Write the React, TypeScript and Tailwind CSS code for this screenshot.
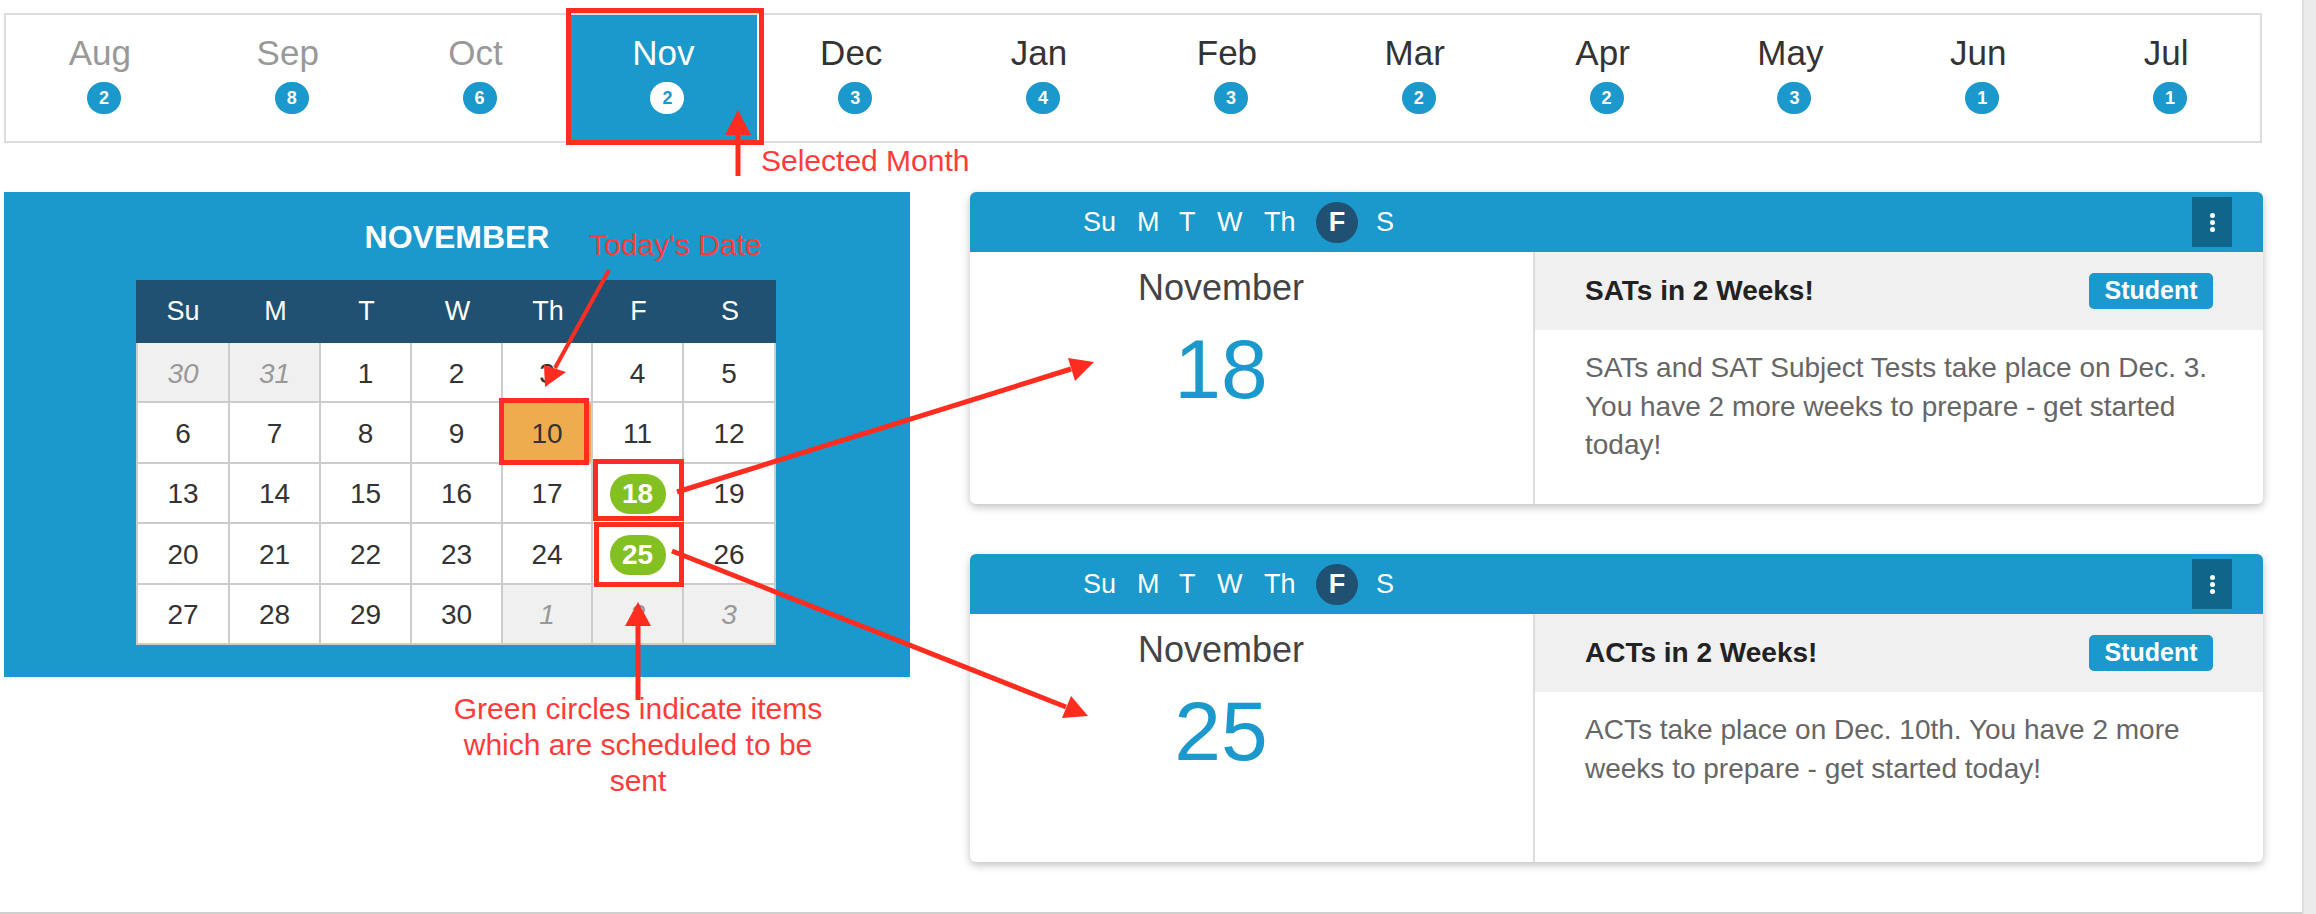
import React from 'react'

const BLUE = 'bg-[#1b98cc]'

const months = [
  { name: 'Aug', count: 2, past: true },
  { name: 'Sep', count: 8, past: true },
  { name: 'Oct', count: 6, past: true },
  { name: 'Nov', count: 2, selected: true },
  { name: 'Dec', count: 3 },
  { name: 'Jan', count: 4 },
  { name: 'Feb', count: 3 },
  { name: 'Mar', count: 2 },
  { name: 'Apr', count: 2 },
  { name: 'May', count: 3 },
  { name: 'Jun', count: 1 },
  { name: 'Jul', count: 1 },
]

const weekHeader = ['Su', 'M', 'T', 'W', 'Th', 'F', 'S']

const days: { label: number; muted?: boolean }[] = [
  { label: 30, muted: true },
  { label: 31, muted: true },
  ...Array.from({ length: 30 }, (_, i) => ({ label: i + 1 })),
  { label: 1, muted: true },
  { label: 2, muted: true },
  { label: 3, muted: true },
]

function MonthTab({ name, count, past, selected }: { name: string; count: number; past?: boolean; selected?: boolean }) {
  return (
    <div className={`flex flex-col items-center pt-[14px] ${selected ? BLUE : ''}`}>
      <div className={`text-[35px] leading-[48px] ${selected ? 'text-white' : past ? 'text-[#999999]' : 'text-[#333333]'}`}>
        {name}
      </div>
      <div
        className={`mt-[5px] ml-[8px] flex h-[32px] w-[34px] items-center justify-center rounded-full text-[18px] font-bold ${
          selected ? 'bg-white text-[#1b98cc]' : 'bg-[#1b98cc] text-white'
        }`}
      >
        {count}
      </div>
    </div>
  )
}

function DayCell({ label, muted, index }: { label: number; muted?: boolean; index: number }) {
  const scheduled = !muted && (label === 18 || label === 25)
  const today = !muted && label === 10
  return (
    <div
      className={`flex h-[60.4px] items-center justify-center border-r-2 border-b-2 border-[#cccccc] pt-[3px] text-[28px] ${
        index % 7 === 0 ? 'border-l-2' : ''
      } ${muted ? 'bg-[#f0f0f0] italic text-[#999999]' : today ? 'bg-[#eeac4f] text-[#333333]' : 'bg-white text-[#333333]'}`}
    >
      {scheduled ? (
        <span className="flex h-[40px] w-[56px] items-center justify-center rounded-full bg-[#83c022] font-bold text-white">
          {label}
        </span>
      ) : (
        label
      )}
    </div>
  )
}

function Calendar() {
  return (
    <div className={`h-[485px] w-[906px] pt-[27px] ${BLUE}`}>
      <div className="text-center text-[32px] leading-[36px] font-bold text-white">NOVEMBER</div>
      <div className="mt-[25px] ml-[132px] w-[640px]">
        <div className="grid h-[63px] grid-cols-[94px_91px_91px_91px_90px_91px_92px] items-center bg-[#215172] text-center text-[27px] text-white">
          {weekHeader.map((d) => (
            <div key={d}>{d}</div>
          ))}
        </div>
        <div className="grid grid-cols-[94px_91px_91px_91px_90px_91px_92px]">
          {days.map((d, i) => (
            <DayCell key={i} index={i} label={d.label} muted={d.muted} />
          ))}
        </div>
      </div>
    </div>
  )
}

function MessageCard({ day, title, body, tall }: { day: number; title: string; body: string; tall?: boolean }) {
  return (
    <div className={`flex flex-col overflow-hidden rounded-[6px] bg-white shadow-[0_3px_8px_rgba(0,0,0,0.25)] ${tall ? 'h-[312px]' : 'h-[308px]'}`}>
      <div className={`flex h-[60px] shrink-0 items-center pr-[31px] pl-[113px] ${BLUE}`}>
        <div className="flex items-center text-[27px] text-white">
          <span className="w-[54px]">Su</span>
          <span className="w-[42px]">M</span>
          <span className="w-[38px]">T</span>
          <span className="w-[47px]">W</span>
          <span className="w-[52px]">Th</span>
          <span className="mr-[18px] flex h-[41px] w-[42px] items-center justify-center rounded-full bg-[#215172] font-bold">
            F
          </span>
          <span>S</span>
        </div>
        <div className="ml-auto flex h-[50px] w-[40px] flex-col items-center justify-center gap-[2px] bg-[#10668a]">
          <span className="h-[5px] w-[5px] rounded-full bg-white" />
          <span className="h-[5px] w-[5px] rounded-full bg-white" />
          <span className="h-[5px] w-[5px] rounded-full bg-white" />
        </div>
      </div>
      <div className="flex min-h-0 flex-1">
        <div className="w-[565px] shrink-0 border-r-2 border-[#dddddd] pr-[61px] text-center">
          <div className="mt-[14px] text-[36px] leading-[44px] text-[#444444]">November</div>
          <div className="mt-[11px] text-[84px] leading-[96px] text-[#1b98cc]">{day}</div>
        </div>
        <div className="flex-1">
          <div className="flex h-[78px] items-center justify-between bg-[#f0f0f0] pr-[50px] pl-[50px]">
            <div className="text-[28px] font-bold text-[#222222]">{title}</div>
            <div className={`flex h-[36px] w-[124px] items-center justify-center rounded-[5px] text-[25px] font-bold text-white ${BLUE}`}>
              Student
            </div>
          </div>
          <p className="mt-[19px] px-[50px] text-[28px] leading-[38.5px] text-[#666666]">{body}</p>
        </div>
      </div>
    </div>
  )
}

// red markup drawn on top of the screenshot
function Annotations() {
  const red = '#ff2d20'
  return (
    <>
      <svg className="absolute top-0 left-0" width="2316" height="914" viewBox="0 0 2316 914" fill="none">
        <g stroke={red} strokeWidth="5">
          <rect x="568.5" y="10.5" width="193" height="132" />
          <rect x="501.5" y="400.5" width="85" height="62" />
          <rect x="595.5" y="461.5" width="86" height="57" />
          <rect x="596.5" y="524.5" width="85" height="60" />
          <line x1="738" y1="176" x2="738" y2="130" />
          <line x1="609" y1="270" x2="555" y2="368" strokeWidth="4" />
          <line x1="677" y1="492" x2="1071" y2="369" />
          <line x1="672" y1="551" x2="1066" y2="707" />
          <line x1="638" y1="700" x2="638" y2="620" />
        </g>
        <g fill={red}>
          <polygon points="738,110 725,135 751,135" />
          <polygon points="545,387 544,365 566,372" />
          <polygon points="1094,362 1068,358 1075,381" />
          <polygon points="1088,716 1071,696 1062,718" />
          <polygon points="638,602 625,626 651,626" />
        </g>
      </svg>
      <div className="absolute top-[141px] left-[761px] text-[30px] leading-[40px] text-[#ff3b3b]">Selected Month</div>
      <div className="absolute top-[225px] left-[589px] text-[30px] leading-[40px] text-[#ff3b3b]">Today's Date</div>
      <div className="absolute top-[691px] left-[438px] w-[400px] text-center text-[30px] leading-[36px] text-[#ff3b3b]">
        Green circles indicate items which are scheduled to be sent
      </div>
    </>
  )
}

export default function App() {
  return (
    <div className="relative h-[914px] w-[2316px] overflow-hidden bg-white font-['Liberation_Sans',Arial,sans-serif]">
      <div className="h-[912px] w-[2302px] pt-[13px] pl-[4px]">
        <div className="grid h-[130px] w-[2258px] grid-cols-12 border-2 border-[#dddddd]">
          {months.map((m) => (
            <MonthTab key={m.name} {...m} />
          ))}
        </div>
        <div className="mt-[49px] flex items-start gap-[60px]">
          <Calendar />
          <div className="flex w-[1293px] flex-col gap-[50px]">
            <MessageCard
              tall
              day={18}
              title="SATs in 2 Weeks!"
              body="SATs and SAT Subject Tests take place on Dec. 3. You have 2 more weeks to prepare - get started today!"
            />
            <MessageCard
              day={25}
              title="ACTs in 2 Weeks!"
              body="ACTs take place on Dec. 10th. You have 2 more weeks to prepare - get started today!"
            />
          </div>
        </div>
      </div>
      <div className="absolute bottom-0 left-0 h-[2px] w-full bg-[#cfcfcf]" />
      <div className="absolute top-0 right-0 h-full w-[14px] border-l-2 border-[#dedede] bg-[#ebebeb]" />
      <Annotations />
    </div>
  )
}
